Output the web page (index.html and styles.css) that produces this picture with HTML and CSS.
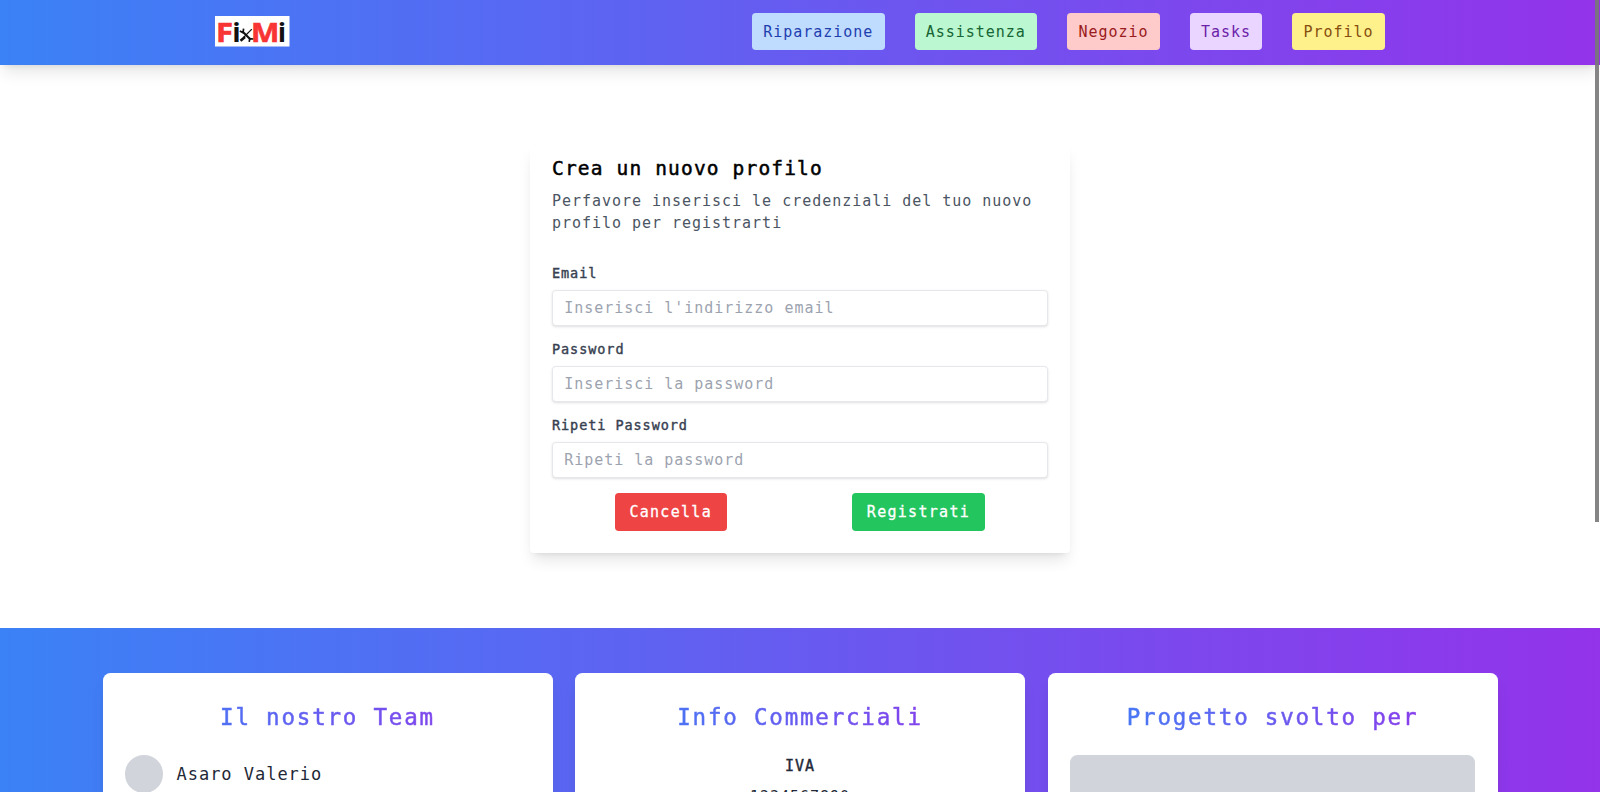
FILE: index.html
```html
<!DOCTYPE html>
<html lang="it">
<head>
<meta charset="utf-8">
<title>FixMi</title>
<link rel="stylesheet" href="styles.css">
</head>
<body>
<header class="header">
  <div class="header-inner">
    <svg class="logo" viewBox="0 0 75 31" role="img" aria-label="FixMi">
      <rect width="74.5" height="30.5" fill="#fff"/>
      <g font-family="Open Sans, sans-serif" font-weight="700" font-size="27.5">
        <text x="1" y="26" fill="#f83434" stroke="#f83434" stroke-width=".6" textLength="17" lengthAdjust="spacingAndGlyphs">F</text>
        <text x="17.2" y="26" fill="#111">i</text>
        <text x="36" y="26" fill="#f83434" stroke="#f83434" stroke-width=".6" textLength="28.4" lengthAdjust="spacingAndGlyphs">M</text>
        <text x="62.8" y="26" fill="#111">i</text>
      </g>
      <g stroke="#111" fill="none">
        <path d="M27.5 15.5 35.5 23.5" stroke-width="2.2"/>
        <path d="M36.8 13.2 28.5 21.5" stroke-width="1.2"/>
        <path d="M30 21 25.5 24.8" stroke-width="2.6"/>
        <path d="M24.8 15 28 16.6 28.6 12.6M34.2 25.8 34.8 22.6 38.3 23" stroke-width="1.7"/>
      </g>
    </svg>
    <nav class="nav">
      <a class="link blue">Riparazione</a>
      <a class="link green">Assistenza</a>
      <a class="link red">Negozio</a>
      <a class="link purple">Tasks</a>
      <a class="link yellow">Profilo</a>
    </nav>
  </div>
</header>
<main class="main">
  <form class="card">
    <h1 class="title">Crea un nuovo profilo</h1>
    <p class="lead">Perfavore inserisci le credenziali del tuo nuovo profilo per registrarti</p>
    <label class="label" for="email">Email</label>
    <input class="input" id="email" type="email" placeholder="Inserisci l'indirizzo email">
    <label class="label" for="pw">Password</label>
    <input class="input" id="pw" type="password" placeholder="Inserisci la password">
    <label class="label" for="pw2">Ripeti Password</label>
    <input class="input" id="pw2" type="password" placeholder="Ripeti la password">
    <div class="actions">
      <button class="btn cancel" type="button">Cancella</button>
      <button class="btn submit" type="button">Registrati</button>
    </div>
  </form>
</main>
<footer class="footer">
  <section class="panel">
    <h2 class="panel-title">Il nostro Team</h2>
    <div class="member"><span class="avatar"></span><span class="name">Asaro Valerio</span></div>
  </section>
  <section class="panel">
    <h2 class="panel-title">Info Commerciali</h2>
    <p class="info strong">IVA</p>
    <p class="info">1234567890</p>
  </section>
  <section class="panel">
    <h2 class="panel-title">Progetto svolto per</h2>
    <div class="picture"></div>
  </section>
</footer>
<div class="scroll-thumb"></div>
</body>
</html>
```
FILE: styles.css
```css
* { box-sizing: border-box; margin: 0; padding: 0; }
html { font-size: 15px; }
body {
  height: 792px;
  overflow: hidden;
  background: #fff;
  font-family: "DejaVu Sans Mono", monospace;
  line-height: 22.5px;
  letter-spacing: .065em;
}
.header {
  position: relative;
  height: 65px;
  background: linear-gradient(to right, #3b82f6, #9333ea);
  box-shadow: 0 10px 15px -3px rgba(0,0,0,.1), 0 4px 6px -4px rgba(0,0,0,.1);
}
.header-inner {
  width: 1170px;
  height: 63px;
  margin: 0 auto;
  display: flex;
  align-items: center;
  justify-content: space-between;
}
.logo { width: 75px; height: 31px; overflow: visible; letter-spacing: 0; }
.nav { display: flex; gap: 30px; }
.link { padding: 8.5px 11.5px 6.5px 11px; border-radius: 3.75px; height: 37.5px; }
.blue { background: #bfdbfe; color: #1e40af; }
.green { background: #bbf7d0; color: #166534; }
.red { background: #fecaca; color: #991b1b; }
.purple { background: #e9d5ff; color: #6b21a8; }
.yellow { background: #fef08a; color: #854d0e; }

.main { height: 563px; padding-top: 80px; }
.card {
  width: 540px;
  height: 408px;
  margin: 0 auto;
  padding: 10.5px 22.5px 0 22px;
  border-radius: 3.75px;
  background: #fff;
  box-shadow: 0 10px 15px -3px rgba(0,0,0,.1), 0 4px 6px -4px rgba(0,0,0,.1);
}
.title {
  font-size: 19.5px;
  font-weight: 400;
  line-height: 26px;
  letter-spacing: 1.16px;
  -webkit-text-stroke: .5px #000;
}
.lead { margin: 8px 0 29px; color: #4b5563; }
.label {
  display: block;
  height: 26.25px;
  font-size: 13.5px;
  line-height: 19px;
  letter-spacing: .93px;
  color: #374151;
  -webkit-text-stroke: .4px #374151;
}
.input {
  display: block;
  width: 100%;
  height: 36px;
  margin-bottom: 14.1px;
  padding: 0 11.25px;
  border: 1px solid #e5e7eb;
  border-radius: 3.75px;
  background: #fff;
  box-shadow: 0 1px 3px rgba(0,0,0,.1), 0 1px 2px -1px rgba(0,0,0,.1);
  font: inherit;
  letter-spacing: inherit;
}
.input::placeholder { color: #9ca3af; }
.actions { display: flex; justify-content: space-around; padding-top: .5px; }
.btn {
  height: 37.5px;
  padding: 0 14.5px;
  border: 0;
  border-radius: 3.75px;
  color: #fff;
  font: inherit;
  letter-spacing: 1.3px;
  -webkit-text-stroke: .3px #fff;
}
.cancel { background: #ef4444; }
.submit { background: #22c55e; }

.footer {
  height: 164px;
  overflow: hidden;
  padding: 44.5px 102.5px 0;
  display: grid;
  grid-template-columns: repeat(3, 1fr);
  gap: 22.5px;
  background: linear-gradient(to right, #3b82f6, #9333ea);
}
.panel {
  padding: 22.5px;
  border-radius: 7.5px;
  background: #fff;
  box-shadow: 0 10px 15px -3px rgba(0,0,0,.1);
}
.panel-title {
  margin-bottom: 15px;
  font-size: 22.5px;
  font-weight: 400;
  line-height: 45px;
  letter-spacing: 1.8px;
  text-align: center;
  color: transparent;
  background: linear-gradient(to right, #3b82f6, #9333ea);
  -webkit-background-clip: text;
  background-clip: text;
  -webkit-text-stroke: .5px transparent;
}
.member { display: flex; align-items: center; gap: 14px; }
.avatar { width: 37.5px; height: 37.5px; border-radius: 50%; background: #d1d5db; }
.name { font-size: 17px; color: #1f2937; padding-top: 1px; }
.info { text-align: center; margin-bottom: 8.5px; color: #1f2937; }
.strong { -webkit-text-stroke: .4px #1f2937; }
.picture { height: 160px; border-radius: 7.5px; background: #d1d5db; }
.scroll-thumb {
  position: absolute;
  top: 0;
  right: 1px;
  width: 4px;
  height: 522px;
  background: rgba(120,120,120,.9);
}
```
